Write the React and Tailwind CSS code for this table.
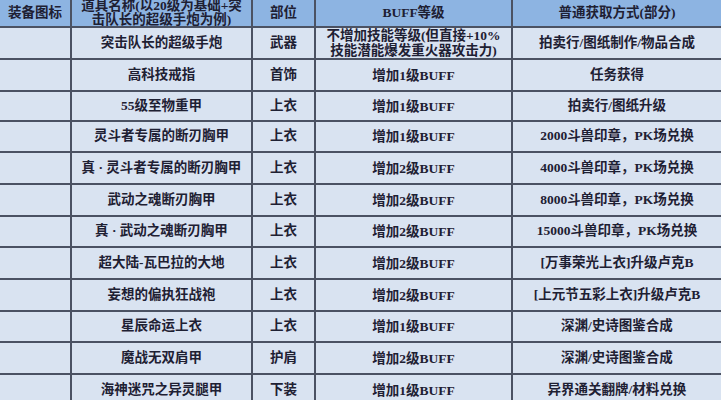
import React from "react";

const rows = [
  { h: "h-[32px]", icon: "", name: "突击队长的超级手炮", part: "武器", buff: ["不增加技能等级(但直接+10%", "技能潜能爆发重火器攻击力)"], src: "拍卖行/图纸制作/物品合成" },
  { h: "h-[32px]", name: "高科技戒指", part: "首饰", buff: ["增加1级BUFF"], src: "任务获得" },
  { h: "h-[30px]", name: "55级至物重甲", part: "上衣", buff: ["增加1级BUFF"], src: "拍卖行/图纸升级" },
  { h: "h-[31px]", name: "灵斗者专属的断刃胸甲", part: "上衣", buff: ["增加1级BUFF"], src: "2000斗兽印章，PK场兑换" },
  { h: "h-[32px]", name: "真 · 灵斗者专属的断刃胸甲", part: "上衣", buff: ["增加2级BUFF"], src: "4000斗兽印章，PK场兑换" },
  { h: "h-[32px]", name: "武动之魂断刃胸甲", part: "上衣", buff: ["增加2级BUFF"], src: "8000斗兽印章，PK场兑换" },
  { h: "h-[31px]", name: "真 · 武动之魂断刃胸甲", part: "上衣", buff: ["增加2级BUFF"], src: "15000斗兽印章，PK场兑换" },
  { h: "h-[32px]", name: "超大陆-瓦巴拉的大地", part: "上衣", buff: ["增加2级BUFF"], src: "[万事荣光上衣]升级卢克B" },
  { h: "h-[32px]", name: "妄想的偏执狂战袍", part: "上衣", buff: ["增加2级BUFF"], src: "[上元节五彩上衣]升级卢克B" },
  { h: "h-[31px]", name: "星辰命运上衣", part: "上衣", buff: ["增加1级BUFF"], src: "深渊/史诗图鉴合成" },
  { h: "h-[32px]", name: "魔战无双肩甲", part: "护肩", buff: ["增加2级BUFF"], src: "深渊/史诗图鉴合成" },
  { h: "h-[32px]", name: "海神迷咒之异灵腿甲", part: "下装", buff: ["增加1级BUFF"], src: "异界通关翻牌/材料兑换" },
];

const font = { fontFamily: '"Liberation Serif", "Noto Sans CJK SC", sans-serif' };

function Cell({ children, last, cls = "" }) {
  return (
    <div
      className={`flex items-center justify-center text-center overflow-hidden border-b-2 border-[#4b5263] ${last ? "" : "border-r-2"} ${cls}`}
    >
      {children}
    </div>
  );
}

export default function App() {
  return (
    <div
      className="w-[721px] h-[400px] overflow-hidden bg-[#d9e3f1] text-[#1e2033] font-bold text-[13.5px]"
      style={font}
    >
      <div className="grid grid-cols-[72px_181px_63px_197px_208px] h-[28px] bg-[#8db4e2]">
        <Cell cls="h-[28px]">装备图标</Cell>
        <Cell cls="h-[28px] leading-[14px]">
          <div className="-mt-[1px]">
            道具名称(以20级为基础+突
            <br />
            击队长的超级手炮为例)
          </div>
        </Cell>
        <Cell cls="h-[28px]">部位</Cell>
        <Cell cls="h-[28px]">BUFF等级</Cell>
        <Cell cls="h-[28px]" last>普通获取方式(部分)</Cell>
      </div>
      {rows.map((r, i) => (
        <div key={i} className={`grid grid-cols-[72px_181px_63px_197px_208px] ${r.h}`}>
          <Cell cls={r.h}></Cell>
          <Cell cls={r.h}>{r.name}</Cell>
          <Cell cls={r.h}>{r.part}</Cell>
          <Cell cls={`${r.h} leading-[15px]`}>
            <div>
              {r.buff.map((b, j) => (
                <div key={j}>{b}</div>
              ))}
            </div>
          </Cell>
          <Cell cls={r.h} last>{r.src}</Cell>
        </div>
      ))}
    </div>
  );
}
